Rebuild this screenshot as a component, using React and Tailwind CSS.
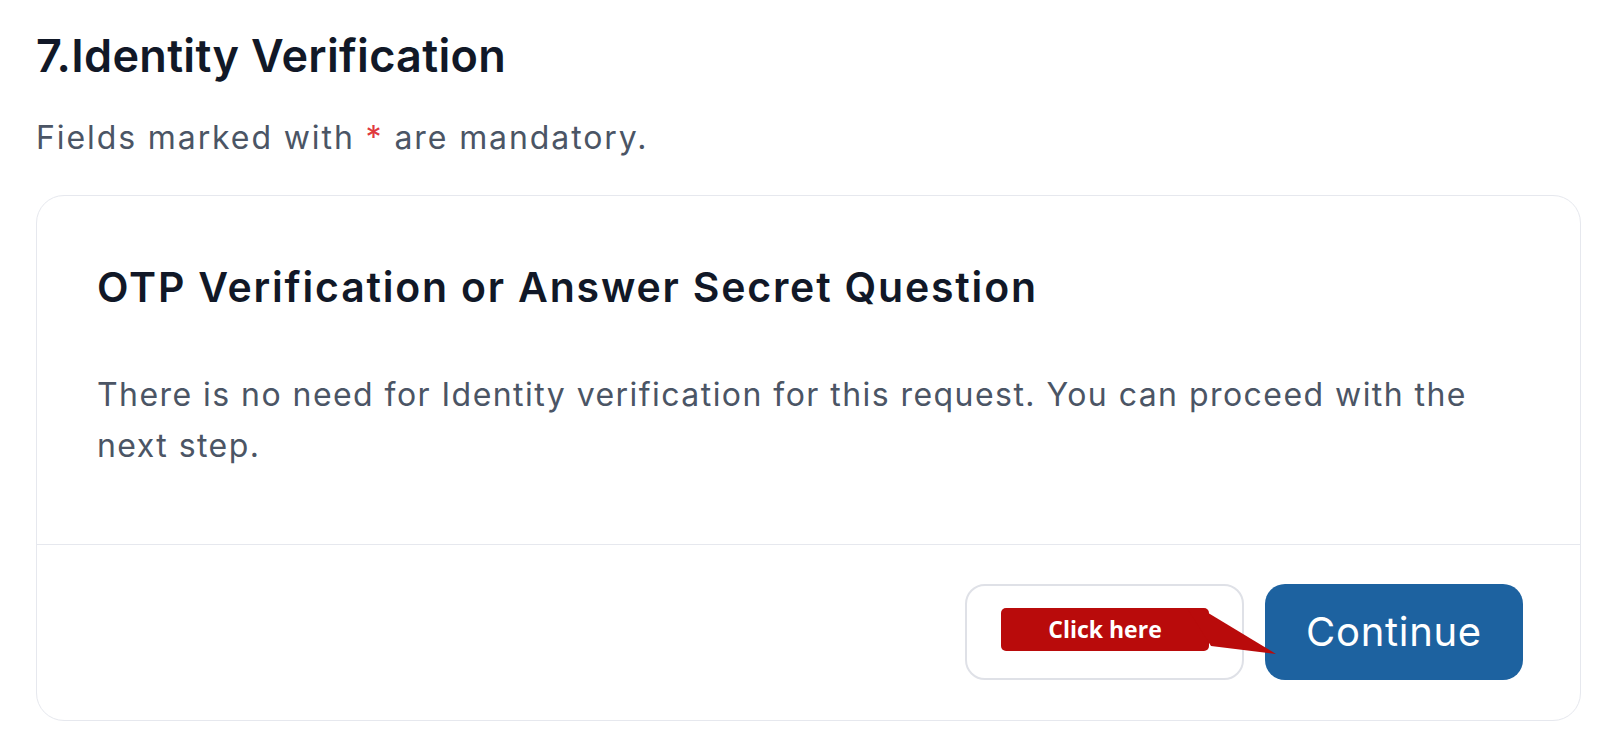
import React from "react";

export default function App() {
  return (
    <div
      className="min-h-[733px] w-[1600px] bg-white pl-[36px] pt-[33px]"
      style={{ fontFamily: "Inter, 'Noto Sans', sans-serif" }}
    >
      <h1 className="text-[45px] font-semibold leading-[45px] tracking-[0.3px] text-[#111827]">
        7.Identity Verification
      </h1>
      <p className="mt-[40px] text-[32px] leading-[40px] tracking-[1.9px] text-[#4b5565]">
        Fields marked with <span className="text-[#e0393e]">*</span> are mandatory.
      </p>

      <div className="mt-[37px] w-[1545px] rounded-[28px] border border-[#e6e8ee] bg-white">
        <div className="px-[60px] pt-[67px] pb-[73px]">
          <h2 className="text-[41px] font-semibold leading-[48px] tracking-[1.8px] text-[#111827]">
            OTP Verification or Answer Secret Question
          </h2>
          <p className="mt-[58px] max-w-[1410px] text-[32px] leading-[51px] tracking-[1.45px] text-[#4b5565]">
            There is no need for Identity verification for this request. You can proceed with the
            next step.
          </p>
        </div>
        <div className="flex justify-end gap-[21px] border-t border-[#e6e8ee] pt-[39px] pb-[40px] pr-[57px]">
          <div className="relative z-10 h-[96px] w-[279px] rounded-[20px] border-2 border-[#dfe1e7] bg-white">
            <div
              className="absolute left-[34px] top-[22px] flex h-[43px] w-[208px] items-center justify-center rounded-[5px] bg-[#b90b0b] text-[23px] font-bold text-white"
              style={{ fontFamily: "'Open Sans', sans-serif" }}
            >
              Click here
            </div>
            <svg
              className="absolute left-[220px] top-[22px]"
              width="92"
              height="50"
              viewBox="0 0 92 50"
            >
              <polygon points="0,0 13,0 89,46 24,38" fill="#b90b0b" />
            </svg>
          </div>
          <button className="h-[96px] w-[258px] rounded-[20px] bg-[#1d62a0] text-[40px] font-normal tracking-[0.7px] text-white">
            Continue
          </button>
        </div>
      </div>
    </div>
  );
}
